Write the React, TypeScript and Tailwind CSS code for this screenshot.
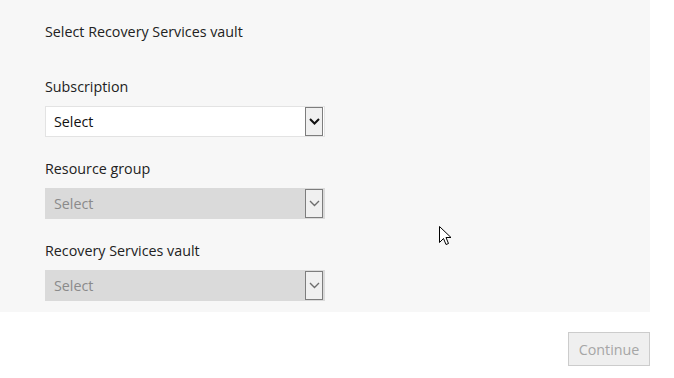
import React from "react";

const font = { fontFamily: '"Open Sans", "Noto Sans", sans-serif' };

function Chevron({ disabled }: { disabled?: boolean }) {
  return (
    <svg width="11" height="7" viewBox="0 0 11 7">
      <polyline
        points="1,1 5.5,5.5 10,1"
        fill="none"
        stroke={disabled ? "#6e6e6e" : "#111"}
        strokeWidth={disabled ? 1.4 : 2}
      />
    </svg>
  );
}

function SelectBox({ disabled }: { disabled?: boolean }) {
  return (
    <div
      className={
        "flex h-[31px] w-[280px] items-center justify-between border p-px " +
        (disabled
          ? "border-[#dadada] bg-[#dadada] text-[#8a8a8a]"
          : "border-[#e3e3e3] bg-white text-[#111]")
      }
    >
      <span className="mt-[2px] pl-[7px] text-[14.3px] leading-none">Select</span>
      <div className="flex h-[29px] w-[18px] items-center justify-center border border-[#7d7d7d] bg-[#f0f0f0]">
        <Chevron disabled={disabled} />
      </div>
    </div>
  );
}

export default function App() {
  return (
    <div className="relative h-[378px] w-[674px] bg-white text-[14.3px]" style={font}>
      <div className="flex h-[312px] w-[650px] flex-col bg-[#f7f7f7] pl-[45px] pt-[21px] text-[#222]">
        <div className="h-[20px] pt-px leading-[20px]">Select Recovery Services vault</div>
        <div className="mt-[35px] h-[20px] pt-px leading-[20px]">Subscription</div>
        <div className="mt-[10px]">
          <SelectBox />
        </div>
        <div className="mt-[21px] h-[20px] pt-px leading-[20px]">Resource group</div>
        <div className="mt-[10px]">
          <SelectBox disabled />
        </div>
        <div className="mt-[21px] h-[20px] pt-px leading-[20px]">Recovery Services vault</div>
        <div className="mt-[10px]">
          <SelectBox disabled />
        </div>
      </div>
      <div className="flex w-[650px] justify-end pt-[20px]">
        <div className="flex h-[34px] w-[82px] items-center justify-center border border-[#cccccc] bg-[#efefef] pt-px text-[#a6a6a6]">
          Continue
        </div>
      </div>
      <svg
        className="absolute left-[439px] top-[226px]"
        width="13"
        height="20"
        viewBox="0 0 13 20"
      >
        <path
          d="M0.5 0.5 L0.5 16.5 L4.5 12.5 L7 18.5 L9.5 17.5 L7 11.5 L12 11.5 Z"
          fill="#fff"
          stroke="#000"
          strokeWidth="1"
          strokeLinejoin="miter"
        />
      </svg>
    </div>
  );
}
